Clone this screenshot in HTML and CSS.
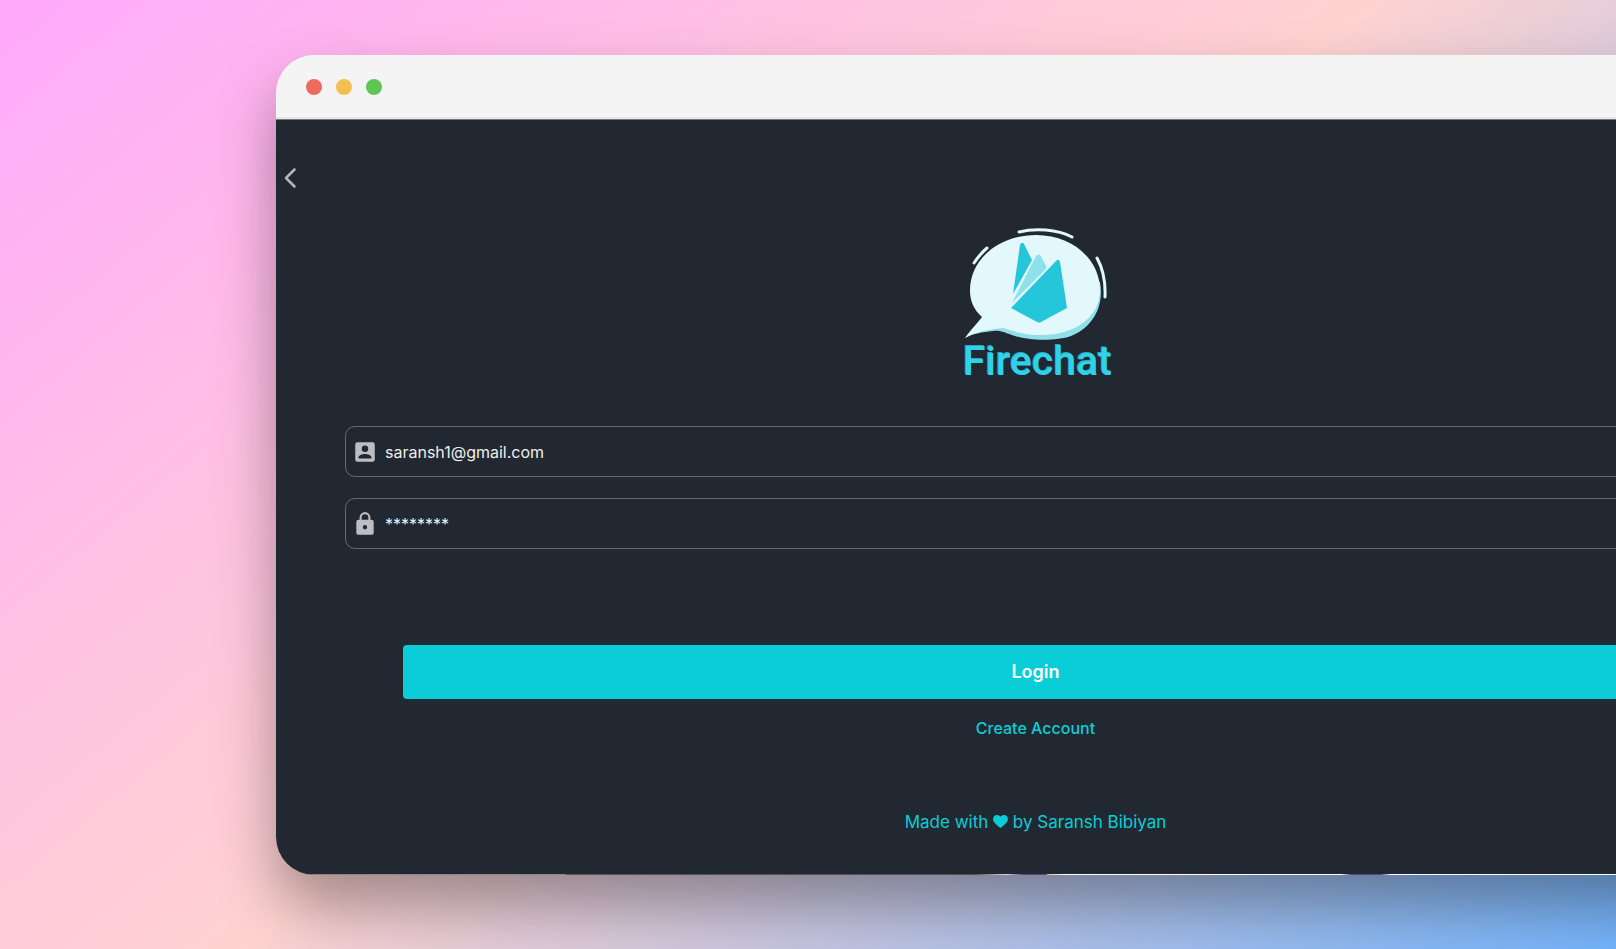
FILE: index.html
```html
<!DOCTYPE html>
<html lang="en">
<head>
<meta charset="utf-8">
<title>Firechat</title>
<link rel="stylesheet" href="styles.css">
</head>
<body>
<div class="window">
  <header class="titlebar">
    <span class="dot dot-close"></span>
    <span class="dot dot-minimize"></span>
    <span class="dot dot-zoom"></span>
  </header>
  <main class="screen">
    <button class="back" type="button" aria-label="Back">
      <svg width="14" height="22" viewBox="0 0 14 22"><path d="M11.500 2.500 3 11l8.500 8.500"/></svg>
    </button>
    <div class="brand">
      <svg class="bubble" width="150" height="114" viewBox="0 0 150 114" aria-hidden="true">
        <path class="shade" d="M0 112C10 100 13 98 17 92L70 20 135 56C140 84 124 103 106 110C92 115 65 115 50 110C40 107 36 104 28 105C17 106 7 108 0 112Z"/>
        <path class="body" d="M0 112C7 102 12 98 17 91C9 84 5 75 5 65C5 32 35 9 71 9C108 9 135 34 135 64C135 91 110 109 76 109C61 109 50 106 38 102C25 103 10 106 0 112Z"/>
        <path class="spark" d="M54 6C70 2 92 3 107 11M9 37Q15 28 22 22M132 32Q141 48 140 71"/>
        <path class="flame" d="M48 68 55 19Q57 15 59 18L67 34Z"/>
        <path class="ember" d="M47 77 71 30Q74 27 76 30L81 40Q82 42 80 44Z"/>
        <path class="flame" d="M46 82 91 35Q94 32 95 36L102 82 76 96Q74 97 72 96Z"/>
      </svg>
      <h1 class="name">Firechat</h1>
    </div>
    <form class="login">
      <label class="field">
        <svg width="26" height="26" viewBox="0 0 24 24" aria-label="Email"><path fill-rule="evenodd" d="M3 5a2 2 0 0 1 2-2h14a2 2 0 0 1 2 2v14a2 2 0 0 1-2 2H5a2 2 0 0 1-2-2Zm12 4a3 3 0 1 0-6 0 3 3 0 0 0 6 0Zm-9 8v1h12v-1c0-2-4-3.100-6-3.100S6 15 6 17Z"/></svg>
        <input type="text" value="saransh1@gmail.com">
      </label>
      <label class="field">
        <svg width="26" height="26" viewBox="0 0 24 24" aria-label="Password"><path fill-rule="evenodd" d="M18 8h-1V6A5 5 0 0 0 7 6v2H6a2 2 0 0 0-2 2v10a2 2 0 0 0 2 2h12a2 2 0 0 0 2-2V10a2 2 0 0 0-2-2ZM12 17a2 2 0 1 1 0-4 2 2 0 0 1 0 4Zm3.100-9H8.900V6a3.100 3.100 0 0 1 6.200 0Z"/></svg>
        <input type="text" value="********">
      </label>
      <button class="submit" type="submit">Login</button>
    </form>
    <a class="create" href="#">Create Account</a>
    <footer class="credit">Made with
      <svg width="15" height="13" viewBox="0 0 16 14" role="img" aria-label="love"><path d="M8 14C3 10 0 7.500 0 4.300 0 1.800 1.900 0 4.200 0 5.800 0 7.200.800 8 2 8.800.800 10.200 0 11.800 0 14.100 0 16 1.800 16 4.300 16 7.500 13 10 8 14Z"/></svg>
      by Saransh Bibiyan</footer>
  </main>
</div>
</body>
</html>
```
FILE: styles.css
```css
* { box-sizing: border-box; }

body {
  margin: 0;
  min-height: 100vh;
  padding-top: 55px;
  overflow: hidden;
  font-family: Inter, "Liberation Sans", sans-serif;
  background: linear-gradient(140deg, #ffa9fc, #ffd3d1 50%, #74b4fb);
}

.window {
  margin-left: 276px;
  margin-right: -179px;
  border-radius: 38px;
  overflow: hidden;
  box-shadow: 0 32px 60px rgba(0, 0, 0, .35);
}

.titlebar {
  display: flex;
  align-items: center;
  gap: 14px;
  height: 64px;
  padding: 2px 0 0 30px;
  background: #f4f4f4;
  border-bottom: 2px solid #e7e7e7;
}

.dot {
  width: 16px;
  height: 16px;
  border-radius: 50%;
}
.dot-close { background: #ec6a5e; }
.dot-minimize { background: #f4be50; }
.dot-zoom { background: #61c555; }

.screen {
  display: flex;
  flex-direction: column;
  align-items: center;
  padding: 45px 0 41px;
  background:
    linear-gradient(90deg, #8d8487 290px, #554f58 290px 700px, #dadada 730px, #6c3e78 747px 770px, #d8c88e 772px, #fff 790px 1065px, #6c3e78 1075px 1105px, #fff 1115px) bottom / 100% 1px no-repeat,
    #222831;
  border-top: 1px solid #777;
}

.back {
  align-self: flex-start;
  display: flex;
  margin-left: 7px;
  padding: 2px 0;
  border: 0;
  background: none;
}
.back path {
  fill: none;
  stroke: #b5b7bf;
  stroke-width: 2.500;
  stroke-linecap: round;
  stroke-linejoin: round;
}

.brand {
  display: flex;
  flex-direction: column;
  align-items: center;
  margin-top: 35px;
  padding-left: 4px;
}
.bubble {
  display: block;
  margin-left: 4px;
}
.shade { fill: #8ee1ea; }
.body { fill: #e2f8fc; }
.spark { fill: none; stroke: #e2f8fc; stroke-width: 3; stroke-linecap: round; }
.flame { fill: #26c6da; }
.ember { fill: #8ee1ea; }

.name {
  margin: 0;
  font-family: Roboto, sans-serif;
  font-size: 41px;
  line-height: 42px;
  font-weight: 500;
  color: #2fd2e9;
  text-shadow: -1px -1px #22adc4;
}

.login {
  align-self: stretch;
  display: flex;
  flex-direction: column;
  gap: 21px;
  margin-top: 44px;
  padding: 0 69px;
}
.field {
  display: flex;
  align-items: center;
  gap: 7px;
  height: 51px;
  padding: 0 6px;
  border: 1px solid #666b74;
  border-radius: 10px;
}
.field path { fill: #bdbec3; }
.field input {
  flex: 1;
  padding: 0;
  border: 0;
  outline: 0;
  background: none;
  color: #eee;
  font: 400 16px/24px Inter, sans-serif;
}
.submit {
  height: 54px;
  margin: 75px 58px 0;
  border: 0;
  border-radius: 4px;
  background: #0bcdd8;
  color: #fff;
  font: 600 18px/24px Inter, sans-serif;
}
.create {
  margin-top: 17px;
  color: #0bcdd8;
  font-size: 16px;
  line-height: 24px;
  font-weight: 500;
  text-decoration: none;
}
.credit {
  margin-top: 70px;
  color: #0bcdd8;
  font-size: 17px;
  line-height: 24px;
}
.credit path { fill: #0bcdd8; }
```
